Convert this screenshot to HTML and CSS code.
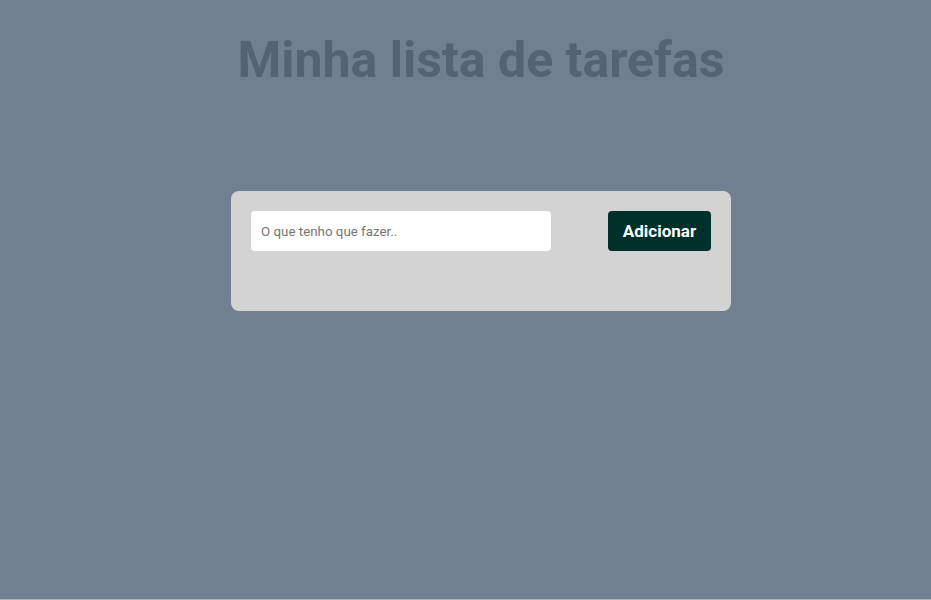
FILE: index.html
```html
<!DOCTYPE html>
<html lang="pt">
<head>
<meta charset="utf-8">
<title>Minha lista de tarefas</title>
<link rel="stylesheet" href="styles.css">
</head>
<body>
<main class="app">
  <h1 class="title">Minha lista de tarefas</h1>
  <section class="card">
    <form class="row">
      <input class="task-input" type="text" placeholder="O que tenho que fazer..">
      <button class="add-btn" type="button">Adicionar</button>
    </form>
  </section>
</main>
</body>
</html>
```

FILE: styles.css
```css
html {
  background: #aab2bb;
}
body {
  margin: 0;
  height: 599px;
  background: #708090;
  font-family: Roboto, "Liberation Sans", sans-serif;
}
.app {
  display: flex;
  flex-direction: column;
  align-items: center;
  padding-left: 31px;
  padding-top: 30px;
}
.title {
  margin: 0;
  font-size: 50px;
  font-weight: 700;
  line-height: 60px;
  color: #556274;
}
.card {
  margin-top: 101px;
  width: 500px;
  height: 120px;
  box-sizing: border-box;
  padding: 20px;
  background: #d3d3d3;
  border-radius: 8px;
}
.row {
  display: flex;
  justify-content: space-between;
  margin: 0;
}
.task-input {
  width: 300px;
  height: 40px;
  box-sizing: border-box;
  border: none;
  border-radius: 4px;
  padding: 0 10px;
  background: #fff;
  font-family: Roboto, "Liberation Sans", sans-serif;
  font-size: 13.333px;
  outline: none;
}
.task-input::placeholder {
  color: #757575;
}
.add-btn {
  width: 103px;
  height: 40px;
  border: none;
  border-radius: 4px;
  background: #00302a;
  color: #fff;
  font-family: Roboto, "Liberation Sans", sans-serif;
  font-size: 17px;
  font-weight: 700;
  padding: 0;
}
```
